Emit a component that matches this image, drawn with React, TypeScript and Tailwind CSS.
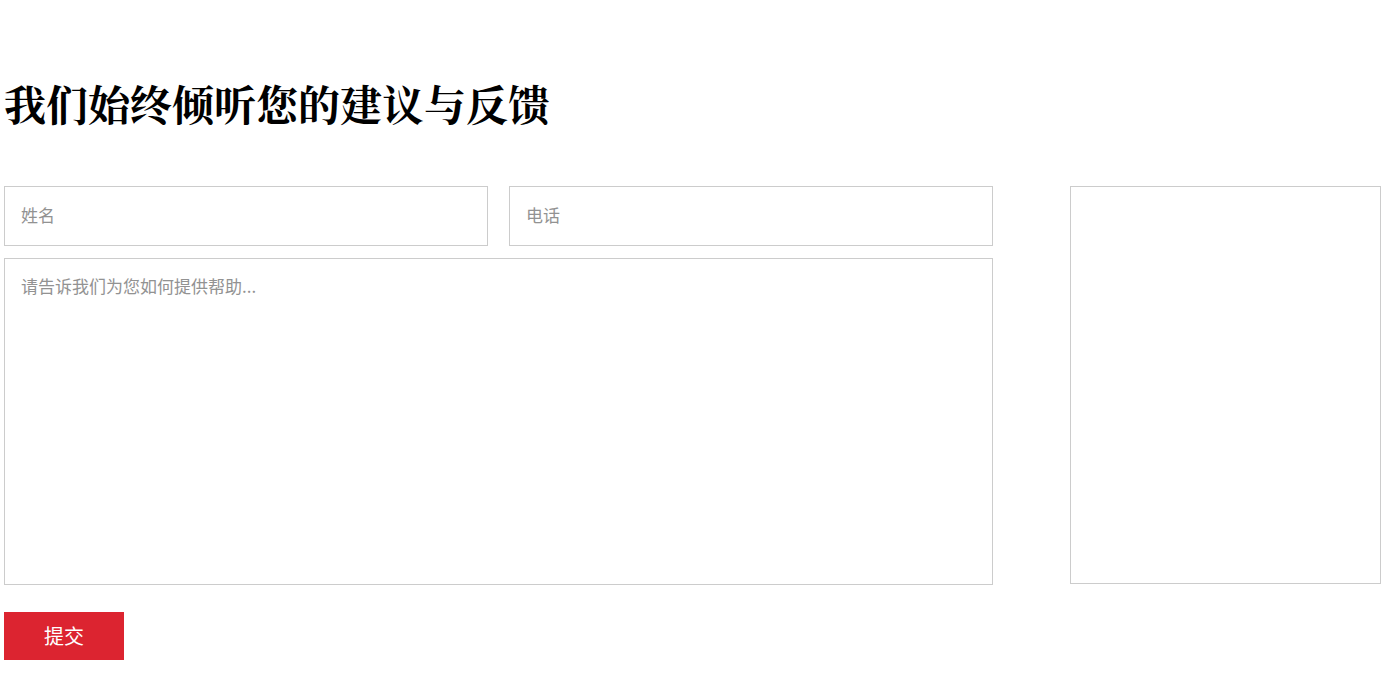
export default function App() {
  const font = { fontFamily: '"Microsoft YaHei", "Noto Sans CJK SC", "Noto Sans", sans-serif' };
  return (
    <div className="min-h-screen bg-white pl-[4px] pr-[6px]" style={font}>
      <h1
        className="pt-[78px] text-[42px] leading-[50px] font-bold text-black"
        style={{ fontFamily: '"Noto Serif CJK SC", "Noto Sans CJK SC", serif' }}
      >
        我们始终倾听您的建议与反馈
      </h1>

      <div className="mt-[58px] flex gap-[77px]">
        <div className="w-[989px]">
          <div className="flex gap-[21px]">
            <input
              placeholder="姓名"
              className="h-[60px] w-[484px] border border-[#cccccc] px-[16px] pb-[4px] text-[17px] text-[#333] placeholder:text-[#929292] outline-none"
            />
            <input
              placeholder="电话"
              className="h-[60px] w-[484px] border border-[#cccccc] px-[16px] pb-[4px] text-[17px] text-[#333] placeholder:text-[#929292] outline-none"
            />
          </div>
          <textarea
            placeholder="请告诉我们为您如何提供帮助..."
            className="mt-[12px] block h-[327px] w-full resize-none border border-[#cccccc] px-[16px] pt-[14px] text-[17px] text-[#333] placeholder:text-[#929292] outline-none"
          />
          <button className="mt-[27px] h-[48px] w-[120px] bg-[#dc2430] text-[20px] text-white">
            提交
          </button>
        </div>
        <div className="h-[398px] w-[311px] border border-[#cccccc]" />
      </div>
    </div>
  );
}
